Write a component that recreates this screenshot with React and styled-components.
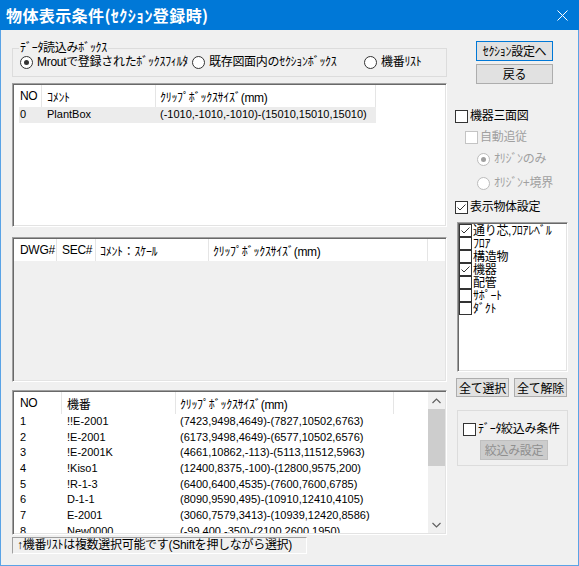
import React from 'react';
import styled, { createGlobalStyle } from 'styled-components';

const Global = createGlobalStyle`
  html, body { margin: 0; padding: 0; background: #f0f0f0; }
  body {
    font-family: "Liberation Sans", "Noto Sans CJK JP", sans-serif;
    font-size: 12px;
    letter-spacing: -0.3px;
    color: #000;
  }
  * { box-sizing: border-box; }
`;

const Window = styled.div`
  width: 579px;
  height: 566px;
  display: flex;
  flex-direction: column;
  background: #f0f0f0;
  overflow: hidden;
`;

const TitleBar = styled.div`
  height: 30px;
  flex: none;
  background: #0078d7;
  color: #fff;
  display: flex;
  align-items: center;
  justify-content: space-between;
  padding: 0 11px 0 6px;
`;

const Title = styled.div`
  font-family: "Noto Sans CJK JP", sans-serif;
  font-weight: 700;
  font-size: 16px;
  letter-spacing: 0.4px;
  line-height: 20px;
`;

const Body = styled.div`
  flex: 1;
  display: flex;
  padding-top: 11px;
  border: 1px solid #5aa3e6;
  border-top: none;
`;

const LeftCol = styled.div`
  width: 435px;
  margin-left: 11px;
  display: flex;
  flex-direction: column;
`;

const RightCol = styled.div`
  width: 113px;
  margin-left: 8px;
  display: flex;
  flex-direction: column;
  align-items: flex-start;
`;

const Group = styled.fieldset`
  margin: 0;
  padding: 0 0 0 7px;
  height: 36px;
  border: 1px solid #dcdcdc;
  min-width: 0;
`;

const Legend = styled.legend`
  padding: 0 1px;
  margin-left: -1px;
  line-height: 14px;
  font-size: 12px;
`;

const RadioRow = styled.div`
  display: grid;
  grid-template-columns: 172px 172px auto;
  align-items: center;
  height: 14px;
`;

const OptionLabel = styled.label`
  display: flex;
  align-items: center;
  gap: ${(p) => p.gap ?? 4}px;
  color: ${(p) => (p.disabled ? '#a0a0a0' : '#000')};
  white-space: nowrap;
  line-height: 14px;
  margin-left: ${(p) => p.ml ?? 0}px;
  margin-top: ${(p) => p.mt ?? 0}px;
`;

const RadioCircle = styled.span`
  width: 13px;
  height: 13px;
  flex: none;
  border-radius: 50%;
  border: 1px solid ${(p) => (p.disabled ? '#bcbcbc' : '#333')};
  background: #fff;
  display: flex;
  align-items: center;
  justify-content: center;
  &::after {
    content: '';
    display: ${(p) => (p.checked ? 'block' : 'none')};
    width: 5px;
    height: 5px;
    border-radius: 50%;
    background: ${(p) => (p.disabled ? '#a0a0a0' : '#333')};
  }
`;

const Box = styled.span`
  width: 13px;
  height: 13px;
  flex: none;
  border: 1px solid ${(p) => (p.disabled ? '#c4c4c4' : '#333')};
  background: #fff;
  display: flex;
  align-items: center;
  justify-content: center;
`;

const Radio = ({ checked, disabled, children, ml, mt }) => (
  <OptionLabel disabled={disabled} ml={ml} mt={mt}>
    <RadioCircle checked={checked} disabled={disabled} />
    <span>{children}</span>
  </OptionLabel>
);

const Check = ({ checked, disabled, children, ml, mt, gap }) => (
  <OptionLabel disabled={disabled} ml={ml} mt={mt} gap={gap ?? 2}>
    <Box disabled={disabled}>
      {checked && (
        <svg width="11" height="11" viewBox="0 0 11 11">
          <path d="M1.5 5.5 L4 8 L9.5 2.5" fill="none" stroke="#333" strokeWidth="1" />
        </svg>
      )}
    </Box>
    <span>{children}</span>
  </OptionLabel>
);

const ListView = styled.div`
  height: ${(p) => p.h}px;
  margin-top: ${(p) => p.mt}px;
  flex: none;
  border: 1px solid;
  border-color: #a0a0a0 #ffffff #ffffff #a0a0a0;
  box-shadow: inset 1px 1px 0 #696969, inset -1px -1px 0 #e3e3e3;
  background: ${(p) => (p.disabled ? '#f0f0f0' : '#fff')};
  padding: 1px;
  display: flex;
  overflow: hidden;
`;

const ListMain = styled.div`
  flex: 1;
  min-width: 0;
  display: flex;
  flex-direction: column;
  overflow: hidden;
`;

const Header = styled.div`
  display: grid;
  grid-template-columns: ${(p) => p.cols};
  height: 22px;
  flex: none;
  background: #fff;
`;

const HeaderCell = styled.div`
  display: flex;
  align-items: center;
  padding-left: ${(p) => p.pad}px;
  border-right: 1px solid ${(p) => (p.last ? 'transparent' : '#e5e5e5')};
  white-space: nowrap;
  overflow: hidden;
`;

const Row = styled.div`
  display: grid;
  grid-template-columns: ${(p) => p.cols};
  height: 15.7px;
  line-height: 15.7px;
  flex: none;
`;

const Cell = styled.div`
  padding-left: ${(p) => p.pad}px;
  white-space: nowrap;
  overflow: hidden;
  font-size: 11px;
  letter-spacing: 0;
  background: ${(p) =>
    !p.sel ? 'transparent' : p.first ? 'linear-gradient(to right, transparent 5px, #ececec 5px)' : '#ececec'};
`;

const ScrollBar = styled.div`
  width: 17px;
  flex: none;
  background: #f0f0f0;
  display: flex;
  flex-direction: column;
`;

const ScrollArrow = styled.div`
  height: 17px;
  flex: none;
  display: flex;
  align-items: center;
  justify-content: center;
`;

const ScrollTrack = styled.div`
  flex: 1;
  display: flex;
  flex-direction: column;
`;

const Thumb = styled.div`
  height: 57px;
  background: #cdcdcd;
`;

const StatusBar = styled.div`
  margin-top: 2px;
  width: 295px;
  height: 17px;
  border: 1px solid;
  border-color: #a0a0a0 #ffffff #ffffff #a0a0a0;
  padding-left: 4px;
  line-height: 15px;
  white-space: nowrap;
  overflow: hidden;
`;

const Button = styled.button`
  font: inherit;
  font-family: "Noto Sans CJK JP", sans-serif;
  font-size: 12px;
  letter-spacing: -0.3px;
  color: ${(p) => (p.disabled ? '#8f8f8f' : '#000')};
  width: ${(p) => p.w}px;
  height: ${(p) => p.h ?? 20}px;
  margin: ${(p) => p.mt ?? 0}px 0 0 ${(p) => p.ml ?? 0}px;
  padding: 0;
  background: ${(p) => (p.disabled ? '#cccccc' : '#e1e1e1')};
  border: 1px solid ${(p) => (p.primary ? '#0078d7' : p.disabled ? '#bfbfbf' : '#adadad')};
  line-height: 16px;
  flex: none;
`;

const ButtonRow = styled.div`
  display: flex;
  gap: 5px;
  margin: 6px 0 0 1px;
`;

const CheckList = styled.div`
  width: 111px;
  height: 150px;
  margin: 8px 0 0 2px;
  border: 1px solid;
  border-color: #a0a0a0 #ffffff #ffffff #a0a0a0;
  box-shadow: inset 1px 1px 0 #696969, inset -1px -1px 0 #e3e3e3;
  background: #fff;
  padding: 1px 0 0 1px;
  display: flex;
  flex-direction: column;
`;

const ItemRow = styled.div`
  height: 13px;
  display: flex;
  align-items: center;
`;

const FilterGroup = styled.div`
  width: 111px;
  height: 56px;
  margin: 13px 0 0 2px;
  border: 1px solid #dcdcdc;
  padding: 11px 0 0 5px;
  display: flex;
  flex-direction: column;
  align-items: flex-start;
`;

const Chevron = ({ up }) => (
  <svg width="9" height="6" viewBox="0 0 9 6">
    <path d={up ? 'M0.5 5 L4.5 1 L8.5 5' : 'M0.5 1 L4.5 5 L8.5 1'} fill="none" stroke="#606060" strokeWidth="1.2" />
  </svg>
);

const Table = ({ h, mt, disabled, cols, headers, rows, selRow, scroll }) => {
  const tpl = `${cols.map((c) => `${c}px`).join(' ')} 1fr`;
  const pads = [6, 5, 4, 4];
  return (
    <ListView h={h} mt={mt} disabled={disabled}>
      <ListMain>
        <Header cols={tpl}>
          {headers.map((t, i) => (
            <HeaderCell key={i} pad={pads[i]}>{t}</HeaderCell>
          ))}
          <HeaderCell last pad={0} />
        </Header>
        {rows.map((r, ri) => (
          <Row key={ri} cols={tpl}>
            {r.map((t, i) => (
              <Cell key={i} pad={pads[i]} first={i === 0} sel={selRow === ri}>{t}</Cell>
            ))}
            <Cell pad={0} />
          </Row>
        ))}
      </ListMain>
      {scroll && (
        <ScrollBar>
          <ScrollArrow><Chevron up /></ScrollArrow>
          <ScrollTrack><Thumb /></ScrollTrack>
          <ScrollArrow><Chevron /></ScrollArrow>
        </ScrollBar>
      )}
    </ListView>
  );
};

const kibanRows = [
  ['1', '!!E-2001', '(7423,9498,4649)-(7827,10502,6763)'],
  ['2', '!E-2001', '(6173,9498,4649)-(6577,10502,6576)'],
  ['3', '!E-2001K', '(4661,10862,-113)-(5113,11512,5963)'],
  ['4', '!Kiso1', '(12400,8375,-100)-(12800,9575,200)'],
  ['5', '!R-1-3', '(6400,6400,4535)-(7600,7600,6785)'],
  ['6', 'D-1-1', '(8090,9590,495)-(10910,12410,4105)'],
  ['7', 'E-2001', '(3060,7579,3413)-(10939,12420,8586)'],
  ['8', 'New0000', '(-99,400,-350)-(2100,2600,1950)'],
];

const objectItems = [
  ['通り芯,ﾌﾛｱﾚﾍﾞﾙ', true],
  ['ﾌﾛｱ', false],
  ['構造物', false],
  ['機器', true],
  ['配管', false],
  ['ｻﾎﾟｰﾄ', false],
  ['ﾀﾞｸﾄ', false],
];

export default function App() {
  return (
    <>
      <Global />
      <Window>
        <TitleBar>
          <Title>物体表示条件(ｾｸｼｮﾝ登録時)</Title>
          <svg width="11" height="11" viewBox="0 0 11 11">
            <path d="M0.5 0.5 L10.5 10.5 M10.5 0.5 L0.5 10.5" stroke="#fff" strokeWidth="1" />
          </svg>
        </TitleBar>
        <Body>
          <LeftCol>
            <Group>
              <Legend>ﾃﾞｰﾀ読込みﾎﾞｯｸｽ</Legend>
              <RadioRow>
                <Radio checked>Mroutで登録されたﾎﾞｯｸｽﾌｨﾙﾀ</Radio>
                <Radio>既存図面内のｾｸｼｮﾝﾎﾞｯｸｽ</Radio>
                <Radio>機番ﾘｽﾄ</Radio>
              </RadioRow>
            </Group>
            <Table
              h={144}
              mt={6}
              cols={[28, 114, 220]}
              headers={['NO', 'ｺﾒﾝﾄ', 'ｸﾘｯﾌﾟﾎﾞｯｸｽｻｲｽﾞ(mm)']}
              rows={[['0', 'PlantBox', '(-1010,-1010,-1010)-(15010,15010,15010)']]}
              selRow={0}
            />
            <Table
              h={145}
              mt={10}
              disabled
              cols={[43, 39, 113, 219]}
              headers={['DWG#', 'SEC#', 'ｺﾒﾝﾄ：ｽｹｰﾙ', 'ｸﾘｯﾌﾟﾎﾞｯｸｽｻｲｽﾞ(mm)']}
              rows={[]}
            />
            <Table
              h={145}
              mt={8}
              cols={[48, 114, 218]}
              headers={['NO', '機番', 'ｸﾘｯﾌﾟﾎﾞｯｸｽｻｲｽﾞ(mm)']}
              rows={kibanRows}
              scroll
            />
            <StatusBar>↑機番ﾘｽﾄは複数選択可能です(Shiftを押しながら選択)</StatusBar>
          </LeftCol>
          <RightCol>
            <Button primary w={77} ml={21}>ｾｸｼｮﾝ設定へ</Button>
            <Button w={77} ml={21} mt={3}>戻る</Button>
            <Check mt={25}>機器三面図</Check>
            <Check disabled ml={10} mt={7}>自動追従</Check>
            <Radio disabled checked ml={22} mt={8}>ｵﾘｼﾞﾝのみ</Radio>
            <Radio disabled ml={22} mt={10}>ｵﾘｼﾞﾝ+境界</Radio>
            <Check checked mt={10}>表示物体設定</Check>
            <CheckList>
              {objectItems.map(([t, c]) => (
                <ItemRow key={t}>
                  <Check checked={c} gap={1}>{t}</Check>
                </ItemRow>
              ))}
            </CheckList>
            <ButtonRow>
              <Button w={53} h={19}>全て選択</Button>
              <Button w={53} h={19}>全て解除</Button>
            </ButtonRow>
            <FilterGroup>
              <Check>ﾃﾞｰﾀ絞込み条件</Check>
              <Button disabled w={68} ml={17} mt={4}>絞込み設定</Button>
            </FilterGroup>
          </RightCol>
        </Body>
      </Window>
    </>
  );
}
